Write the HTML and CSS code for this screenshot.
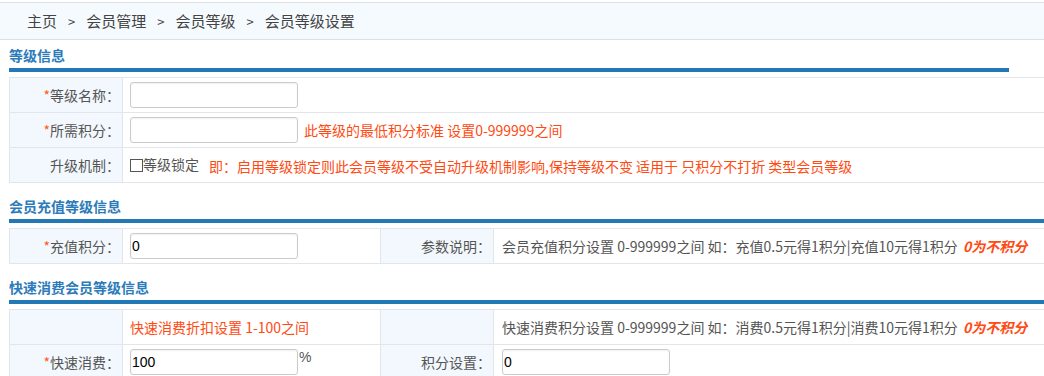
FILE: index.html
```html
<!DOCTYPE html>
<html lang="zh-CN">
<head>
<meta charset="utf-8">
<title>会员等级设置</title>
<link rel="stylesheet" href="styles.css">
</head>
<body>
<div class="crumb">
  <span>主页</span><span class="sep">&gt;</span><span>会员管理</span><span class="sep">&gt;</span><span>会员等级</span><span class="sep">&gt;</span><span>会员等级设置</span>
</div>
<div class="page">
  <div class="sec-title">等级信息</div>
  <div class="bar bar-short"></div>
  <table class="form">
    <tr>
      <td class="lbl"><span class="req">*</span>等级名称：</td>
      <td class="val"><input class="txt" type="text"></td>
    </tr>
    <tr>
      <td class="lbl"><span class="req">*</span>所需积分：</td>
      <td class="val"><input class="txt" type="text"><span class="hint">此等级的最低积分标准 设置0-999999之间</span></td>
    </tr>
    <tr>
      <td class="lbl">升级机制：</td>
      <td class="val"><span class="chk"></span>等级锁定<span class="hint hint-wide">即：启用等级锁定则此会员等级不受自动升级机制影响,保持等级不变 适用于 只积分不打折 类型会员等级</span></td>
    </tr>
  </table>

  <div class="sec-title gap">会员充值等级信息</div>
  <div class="bar"></div>
  <table class="form">
    <tr>
      <td class="lbl"><span class="req">*</span>充值积分：</td>
      <td class="val c2"><input class="txt" type="text" value="0"></td>
      <td class="lbl c3">参数说明：</td>
      <td class="val v4">会员充值积分设置 0-999999之间 如：充值0.5元得1积分|充值10元得1积分 <b class="zero">0为不积分</b></td>
    </tr>
  </table>

  <div class="sec-title gap">快速消费会员等级信息</div>
  <div class="bar"></div>
  <table class="form">
    <tr>
      <td class="lbl"></td>
      <td class="val c2"><span class="red">快速消费折扣设置 1-100之间</span></td>
      <td class="lbl c3"></td>
      <td class="val v4">快速消费积分设置 0-999999之间 如：消费0.5元得1积分|消费10元得1积分 <b class="zero">0为不积分</b></td>
    </tr>
    <tr>
      <td class="lbl"><span class="req">*</span>快速消费：</td>
      <td class="val c2"><input class="txt" type="text" value="100"><span class="pct">%</span></td>
      <td class="lbl c3">积分设置：</td>
      <td class="val v4"><input class="txt" type="text" value="0"></td>
    </tr>
  </table>
</div>
</body>
</html>
```

FILE: styles.css
```css
html, body {
  overflow: hidden;
}
body {
  margin: 0;
  font-family: "Noto Sans CJK SC", "Liberation Sans", sans-serif;
  font-size: 14px;
  color: #555;
  background: #fff;
}
.crumb {
  margin-top: 2px;
  height: 36px;
  line-height: 36px;
  border-top: 1px solid #dde1e5;
  border-bottom: 1px solid #dde1e5;
  background: #f5fafe;
  padding-left: 27px;
  font-size: 15px;
  color: #444;
  white-space: nowrap;
}
.crumb .sep {
  margin: 0 11px;
  font-size: 13px;
}
.page {
  padding-left: 9px;
}
.sec-title {
  padding-top: 2px;
  line-height: 26px;
  font-size: 14px;
  font-weight: bold;
  color: #2c7bba;
  white-space: nowrap;
}
.sec-title.gap {
  margin-top: 8px;
}
.bar {
  height: 4px;
  background: #2279b5;
  width: 1045px;
}
.bar.bar-short {
  width: 1000px;
}
.form {
  margin-top: 5px;
  border-collapse: collapse;
  width: 1060px;
  white-space: nowrap;
}
.form td {
  border: 1px solid #e2e5e9;
  height: 34px;
  padding: 0;
  vertical-align: middle;
}
.form .lbl {
  width: 110px;
  padding-right: 2px;
  text-align: right;
  background: #f2f8fd;
  color: #555;
}
.form .val {
  padding-left: 7px;
}
.form .v4 {
  padding-left: 8px;
}
.form .c2 {
  width: 250px;
}
.form .c3 {
  width: 110px;
}
.req {
  color: #ff5a1f;
}
.txt {
  box-sizing: border-box;
  width: 168px;
  height: 26px;
  border: 1px solid #c9cbcd;
  border-radius: 3px;
  padding: 0 1px;
  font-family: "Liberation Sans", "Noto Sans CJK SC", sans-serif;
  font-size: 14px;
  color: #000;
  vertical-align: middle;
  box-shadow: inset 0 1px 2px rgba(0, 0, 0, 0.06);
  outline: none;
}
.hint {
  margin-left: 6px;
  color: #ff4a12;
  vertical-align: middle;
}
.hint-wide {
  margin-left: 10px;
}
.red {
  color: #ff4a12;
}
.chk {
  display: inline-block;
  box-sizing: border-box;
  width: 13px;
  height: 13px;
  border: 1px solid #555;
  vertical-align: -2px;
  background: #fff;
}
.zero {
  color: #ff4a12;
  font-style: italic;
  font-weight: bold;
  margin-left: 2px;
}
.pct {
  display: inline-block;
  vertical-align: top;
  margin-top: 0;
  margin-left: 1px;
  font-family: "Liberation Sans", sans-serif;
  font-size: 14px;
  color: #555;
}
```
